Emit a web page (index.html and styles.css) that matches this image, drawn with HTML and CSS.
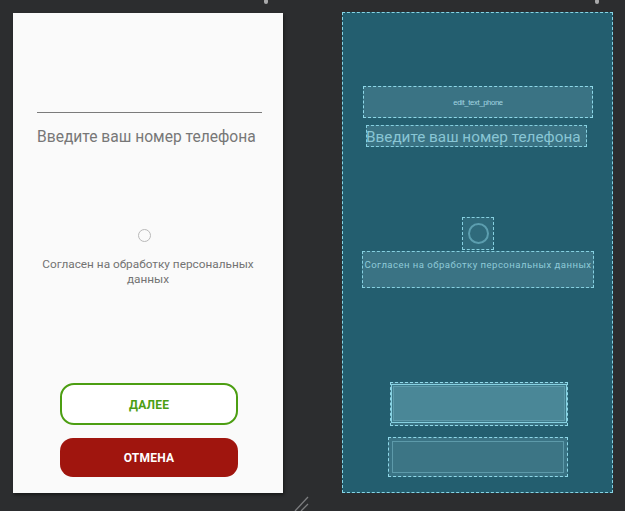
FILE: index.html
```html
<!DOCTYPE html>
<html>
<head>
<meta charset="utf-8">
<link rel="stylesheet" href="styles.css">
</head>
<body>
<div class="stage">
  <div class="phone">
    <div class="edit"></div>
    <div class="hint">Введите ваш номер телефона</div>
    <div class="radio"></div>
    <div class="consent">Согласен на обработку персональных данных</div>
    <div class="spacer"></div>
    <div class="btn btn-next">ДАЛЕЕ</div>
    <div class="btn btn-cancel">ОТМЕНА</div>
  </div>
  <div class="blueprint">
    <div class="bp-edit">edit_text_phone</div>
    <div class="bp-hint">Введите ваш номер телефона</div>
    <div class="bp-radio"><div class="bp-circle"></div></div>
    <div class="bp-consent">Согласен на обработку персональных данных</div>
    <div class="spacer"></div>
    <div class="bp-btn1"><div class="bp-btn1-inner"></div></div>
    <div class="bp-btn2"><div class="bp-btn2-inner"></div></div>
  </div>
</div>
<div class="handle handle-a"></div>
<div class="handle handle-b"></div>
<svg class="resize" width="20" height="16" viewBox="0 0 20 16">
  <line x1="14" y1="1" x2="1" y2="15" stroke="#7d7e80" stroke-width="1.3"/>
  <line x1="14" y1="8" x2="7" y2="15" stroke="#7d7e80" stroke-width="1.3"/>
</svg>
</body>
</html>
```
FILE: styles.css
```css
html, body {
  margin: 0;
  padding: 0;
  background: #2c2d2f;
  width: 625px;
  height: 511px;
  overflow: hidden;
  font-family: Roboto, "Noto Sans", sans-serif;
}
.stage {
  display: flex;
  align-items: flex-start;
  padding: 12px 0 0 13px;
  gap: 59px;
}
.phone {
  margin-top: 1px;
  width: 270px;
  height: 480px;
  background: #fafafa;
  box-shadow: 1px 2px 3px rgba(0,0,0,0.45);
  display: flex;
  flex-direction: column;
  box-sizing: border-box;
  padding-bottom: 16px;
}
.edit {
  margin: 73px 21px 0 24px;
  height: 26px;
  border-bottom: 1px solid #7b7b7b;
}
.hint {
  margin: 13px 0 0 24px;
  font-size: 15.6px;
  line-height: 22px;
  color: #777777;
  white-space: nowrap;
}
.radio {
  margin: 81px 0 0 125px;
  width: 11px;
  height: 11px;
  border: 1.3px solid #b9b9b9;
  border-radius: 50%;
}
.consent {
  margin: 15px 20px 0 20px;
  font-size: 11.8px;
  line-height: 14.5px;
  color: #737373;
  text-align: center;
}
.spacer { flex: 1; }
.btn {
  align-self: flex-start;
  margin-left: 47px;
  width: 178px;
  box-sizing: border-box;
  display: flex;
  align-items: center;
  justify-content: center;
  font-weight: bold;
  font-size: 12px;
  letter-spacing: 0.2px;
}
.btn-next {
  height: 42px;
  border: 2.3px solid #4c9e12;
  border-radius: 14px;
  background: #ffffff;
  color: #4c9e12;
  padding-top: 1px;
}
.btn-cancel {
  margin-top: 13px;
  height: 39px;
  border-radius: 13px;
  background: #a0150e;
  color: #ffffff;
}
.blueprint {
  width: 271px;
  height: 481px;
  background: #235e6f;
  border: 1px dashed #86d5e6;
  box-sizing: border-box;
  display: flex;
  flex-direction: column;
  padding-bottom: 15px;
}
.bp-edit {
  margin: 73px 19px 0 20px;
  height: 32px;
  border: 1px dashed #8ed8e8;
  background: #3a7384;
  box-sizing: border-box;
  color: #a4d6e2;
  font-family: "Liberation Sans Narrow", "Liberation Sans", sans-serif;
  font-size: 7.6px;
  letter-spacing: -0.3px;
  padding-top: 1px;
  display: flex;
  align-items: center;
  justify-content: center;
}
.bp-hint {
  margin: 7px 25px 0 23px;
  height: 22px;
  border: 1px dashed #86d0e0;
  background: #3a7384;
  box-sizing: border-box;
  color: #89c6d5;
  font-size: 15.3px;
  line-height: 23px;
  white-space: nowrap;
  overflow: visible;
  text-indent: -1px;
}
.bp-radio {
  margin: 70px 0 0 119px;
  width: 32px;
  height: 33px;
  border: 1px dashed #86d0e0;
  box-sizing: border-box;
  background: #2f6a7b;
  display: flex;
  align-items: center;
  justify-content: center;
}
.bp-circle {
  width: 17px;
  height: 17px;
  border: 2px solid #5c9eaf;
  border-radius: 50%;
}
.bp-consent {
  margin: 1px 18px 0 19px;
  height: 37px;
  border: 1px dashed #86d0e0;
  background: #3a7384;
  box-sizing: border-box;
  color: #8ecad8;
  font-size: 9.6px;
  letter-spacing: 0.45px;
  line-height: 12px;
  padding-top: 7px;
  white-space: nowrap;
  text-align: center;
}
.bp-btn1 {
  margin-left: 47px;
  width: 178px;
  height: 44px;
  border: 1px dashed #8ed8e8;
  box-sizing: border-box;
  padding: 1px 0 2px 0;
  background: #3a7384;
}
.bp-btn1-inner {
  height: 100%;
  border: 1px solid #86d0e0;
  box-sizing: border-box;
  background: #4a8797;
  box-shadow: inset 0 0 0 1px #3f7c8c, inset 0 0 0 2px #5d9aaa;
}
.bp-btn2 {
  margin: 11px 0 0 45px;
  width: 180px;
  height: 40px;
  border: 1px dashed #8ed8e8;
  box-sizing: border-box;
  padding: 3px;
  background: #3a7384;
}
.bp-btn2-inner {
  height: 100%;
  border: 1px solid #5d9aaa;
  box-sizing: border-box;
  background: #3c7585;
}
.handle {
  position: absolute;
  top: -1px;
  width: 4px;
  height: 5px;
  border-radius: 2px;
  background: #a9a9ab;
}
.handle-a { left: 264px; }
.handle-b { left: 595px; }
.resize {
  position: absolute;
  left: 294px;
  top: 496px;
}
```
